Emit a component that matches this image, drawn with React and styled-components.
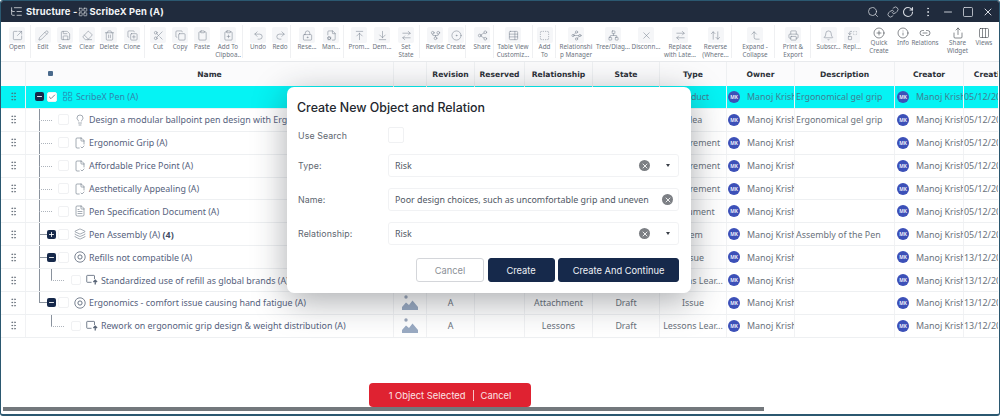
import React from 'react';
import styled, { createGlobalStyle } from 'styled-components';
import {
  SquareArrowOutUpRight, Pencil, Save, Eraser, Trash2, CopyPlus, Scissors, Copy, Clipboard, ClipboardPlus,
  Undo2, Redo2, LockKeyhole, FileCog, ArrowUpToLine, ArrowDownToLine, ArrowRightLeft, GitFork, CircleDot,
  Share2, TableProperties, SquareDashed, Waypoints, Network, X, ArrowUpDown, CornerLeftUp, Printer, Bell, Replace,
  CirclePlus, Info, Link2, Share, Columns3, Search, Link, RotateCw, EllipsisVertical, Minus, Square,
  ListTree, LayoutGrid, GripVertical, Check, Lightbulb, FileCheck2, FileText, Layers, Plus
} from 'lucide-react';

const GlobalStyle = createGlobalStyle`
  html, body { margin: 0; padding: 0; background: #fff; }
  body { font-family: "Noto Sans", sans-serif; }
`;

const Page = styled.div`
  position: relative;
  width: 1000px;
  height: 416px;
  box-sizing: border-box;
  border: 1px solid #2b5870;
  border-bottom-width: 2px;
  border-radius: 3px;
  display: flex;
  flex-direction: column;
  overflow: hidden;
  background: #fff;
`;

const TitleBar = styled.div`
  height: 21px;
  background: #202b3d;
  color: #f2f4f7;
  display: flex;
  align-items: center;
  padding: 0 5px 0 9px;
  font-family: Inter, sans-serif;
  font-weight: 700;
  font-size: 9.4px;
  flex: none;
`;

const TitleText = styled.span`
  margin-left: 3px;
  display: flex;
  align-items: center;
  gap: 1px;
  letter-spacing: 0.15px;
`;

const TitleActions = styled.div`
  margin-left: auto;
  display: flex;
  align-items: center;
  gap: 8px;
  color: #d7dbe2;
`;

const TitleLink = styled.span`
  display: flex;
  margin-right: -5px;
`;

const Toolbar = styled.div`
  height: 39px;
  flex: none;
  display: flex;
  padding-left: 3px;
  border-bottom: 1px solid #e8eaed;
  overflow: hidden;
`;

const ToolGroup = styled.div`
  display: flex;
  flex: none;
  margin-right: ${p => p.$gap ?? 1}px;
  padding-right: 1px;
  position: relative;
  &::after {
    content: '';
    position: absolute;
    right: 0;
    top: 3px;
    bottom: 3px;
    border-right: 1px solid ${p => (p.$plain || p.$bare ? 'transparent' : '#eff0f2')};
  }
`;

const Tool = styled.div`
  width: ${p => p.$w}px;
  flex: none;
  display: flex;
  flex-direction: column;
  align-items: center;
  padding-top: 5px;
  font-size: 6.3px;
  line-height: 7.6px;
  color: #6c7480;
  text-align: center;
`;

const Tile = styled.div`
  width: ${p => (p.$plain ? 12 : 16)}px;
  height: ${p => (p.$plain ? 12 : 16)}px;
  background: ${p => (p.$plain ? 'transparent' : '#f5f6f8')};
  color: ${p => (p.$plain ? '#3a3f47' : '#76808e')};
  border-radius: 2px;
  display: flex;
  align-items: center;
  justify-content: center;
`;

const ToolLabel = styled.span`
  white-space: pre;
`;

const Table = styled.div`
  flex: 1;
  overflow: hidden;
  min-height: 0;
  margin-right: 1px;
`;

const cols = '25px 368px 33px 48px 50px 68px 67px 67px 68px 100px 69px 80px';

const HeaderRow = styled.div`
  display: grid;
  grid-template-columns: ${cols};
  height: 24px;
  background: #fbfbfc;
  width: 1053px;
`;

const HeaderCell = styled.div`
  display: flex;
  align-items: center;
  justify-content: center;
  font-family: "DejaVu Sans", sans-serif;
  font-weight: 700;
  font-size: 7.6px;
  color: #2c3138;
  border-right: 1px solid #eef0f2;
  white-space: nowrap;
  overflow: hidden;
`;

const NameHead = styled(HeaderCell)`
  position: relative;
  & > i {
    position: absolute;
    left: 22px;
    top: 9px;
    width: 5px;
    height: 5px;
    border-radius: 1px;
    background: #4a6a8c;
  }
`;

const Row = styled.div`
  display: grid;
  grid-template-columns: ${cols};
  height: 22.9px;
  box-sizing: border-box;
  width: 1053px;
  border-bottom: 1px solid #eef0f2;
  background: ${p => (p.$selected ? '#05f3f4' : '#fff')};
`;

const Cell = styled.div`
  display: flex;
  align-items: center;
  justify-content: ${p => (p.$left ? 'flex-start' : 'center')};
  padding-left: ${p => p.$pad || 0}px;
  gap: 7px;
  font-size: 8.9px;
  color: ${p => (p.$selected ? '#3f7f93' : '#6a727c')};
  border-right: 1px solid #f1f2f4;
  white-space: nowrap;
  overflow: hidden;
  min-width: 0;
`;

const DragCell = styled(Cell)`
  color: #59636e;
`;

const TreeCell = styled.div`
  display: flex;
  align-items: stretch;
  padding-left: ${p => (p.$root ? 9 : 13)}px;
  border-right: 1px solid #f1f2f4;
  white-space: nowrap;
  overflow: hidden;
`;

const Guide = styled.div`
  width: ${p => p.$w}px;
  flex: none;
  position: relative;
  &::before {
    content: '';
    position: absolute;
    left: 0;
    top: -1px;
    height: ${p => (p.$vert === 'half' ? '12px' : p.$vert === 'full' ? '25px' : '0')};
    border-left: 1px solid #8a929d;
  }
  &::after {
    content: '';
    position: absolute;
    left: 0;
    right: ${p => p.$end || 0}px;
    top: 11px;
    border-top: 1px ${p => (p.$dash ? 'dotted #aeb4bc' : 'none')};
  }
`;

const Expander = styled.div`
  width: 9px;
  height: 9px;
  flex: none;
  align-self: center;
  border-radius: 2px;
  background: #16294b;
  color: #fff;
  display: flex;
  align-items: center;
  justify-content: center;
`;

const Stub = styled.div`
  width: ${p => p.$w}px;
  flex: none;
  align-self: center;
  border-top: 1px solid #8a929d;
`;

const CheckBox = styled.div`
  width: ${p => p.$size || 10}px;
  height: ${p => p.$size || 10}px;
  flex: none;
  align-self: center;
  margin-left: ${p => p.$ml || 0}px;
  border: 1px solid #f0f1f3;
  border-radius: 2px;
  box-sizing: border-box;
  background: #fff;
  color: #3a4657;
  display: flex;
  align-items: center;
  justify-content: center;
`;

const RowIcon = styled.span`
  width: 12px;
  flex: none;
  margin-left: ${p => p.$ml || 5}px;
  display: flex;
  align-items: center;
  justify-content: center;
  color: ${p => (p.$selected ? '#2f78a8' : '#5a6678')};
`;

const NameText = styled.span`
  margin-left: 3px;
  align-self: center;
  font-size: 8.9px;
  color: ${p => (p.$selected ? '#2f86ad' : '#56627d')};
  & b {
    font-weight: 700;
    color: #3f4a63;
  }
`;

const Avatar = styled.span`
  width: 12px;
  height: 12px;
  flex: none;
  border-radius: 50%;
  background: #3c50b8;
  color: #fff;
  font-size: 4.8px;
  font-weight: 600;
  display: flex;
  align-items: center;
  justify-content: center;
`;

const ScrollTrack = styled.div`
  height: 4px;
  flex: none;
  margin: 0 0 3px 2px;
`;

const ScrollThumb = styled.div`
  height: 100%;
  width: 761px;
  background: #73787c;
`;

const SelectionBar = styled.div`
  position: absolute;
  left: 368px;
  top: 382px;
  width: 162px;
  height: 24px;
  border-radius: 4px;
  background: #df2231;
  color: #fbe4e6;
  font-family: Inter, sans-serif;
  font-size: 9.4px;
  display: flex;
  align-items: center;
  justify-content: center;
  gap: 7px;
  & > i {
    width: 1px;
    height: 11px;
    background: #f6c4c8;
  }
`;

const Modal = styled.div`
  position: absolute;
  left: 286px;
  top: 86px;
  width: 404px;
  height: 206px;
  box-sizing: border-box;
  padding: 12px 12px 0 10px;
  border-radius: 7px;
  background: #fff;
  box-shadow: 0 8px 34px rgba(30, 34, 42, 0.38);
  font-family: Inter, sans-serif;
`;

const ModalTitle = styled.div`
  font-size: 12.4px;
  font-weight: 500;
  color: #23272e;
  line-height: 18px;
  margin-bottom: 10px;
`;

const Form = styled.div`
  display: grid;
  grid-template-columns: 91px 1fr;
  align-items: center;
  row-gap: 11px;
`;

const FieldLabel = styled.div`
  font-size: 8.8px;
  color: #5e6670;
  padding-left: 1px;
  letter-spacing: 0.1px;
`;

const Field = styled.div`
  height: 23px;
  box-sizing: border-box;
  border: 1px solid #f1f2f4;
  border-radius: 3px;
  display: flex;
  align-items: center;
  padding: 0 5px 0 6px;
  font-family: "Noto Sans", sans-serif;
  font-size: 8.9px;
  color: #4f5864;
`;

const FieldValue = styled.span`
  flex: 1;
  white-space: nowrap;
  overflow: hidden;
`;

const FieldIcons = styled.span`
  display: flex;
  align-items: center;
  gap: 13px;
`;

const Clear = styled.span`
  width: 11px;
  height: 11px;
  border-radius: 50%;
  background: #7c7f84;
  color: #fff;
  display: flex;
  align-items: center;
  justify-content: center;
`;

const Caret = styled.span`
  width: 0;
  height: 0;
  margin: 0 3px;
  border-left: 2.5px solid transparent;
  border-right: 2.5px solid transparent;
  border-top: 3px solid #3a3f47;
`;

const Buttons = styled.div`
  display: flex;
  justify-content: flex-end;
  gap: 3.5px;
  margin-top: 13px;
`;

const Button = styled.button`
  width: ${p => p.$w}px;
  height: 24px;
  border-radius: 3px;
  font-family: Inter, sans-serif;
  font-size: 9.3px;
  padding: 0;
  border: 1px solid ${p => (p.$ghost ? '#d4d6da' : '#16294b')};
  background: ${p => (p.$ghost ? '#fff' : '#16294b')};
  color: ${p => (p.$ghost ? '#8b9097' : '#eef1f6')};
`;

const ImageThumb = () => (
  <svg width="16" height="17" viewBox="0 0 16 17">
    <circle cx="4" cy="3" r="1.7" fill="#9aa7bb" />
    <path d="M0 16 L0 13 L4 8.5 L7 11 L10.5 6.5 L16 13 L16 16 Z" fill="#9aabc3" />
  </svg>
);

const TargetIcon = () => (
  <svg width="12" height="12" viewBox="0 0 12 12" fill="none" stroke="currentColor">
    <circle cx="6" cy="6" r="5.2" strokeWidth="0.8" />
    <circle cx="6" cy="6" r="2.1" strokeWidth="0.9" />
  </svg>
);

const LessonIcon = () => (
  <svg width="13" height="12" viewBox="0 0 13 12" fill="none" stroke="currentColor">
    <path d="M6 8.5H1.5a.7.7 0 0 1-.7-.7V1.7A.7.7 0 0 1 1.5 1h7a.7.7 0 0 1 .7.7V5" strokeWidth="0.9" />
    <path d="M10 11V6.5M8 8.2 10 6.2l2 2" strokeWidth="1.4" />
  </svg>
);

const toolGroups = [
  { gap: 1, tools: [['Open', SquareArrowOutUpRight, 26]] },
  { gap: 1, tools: [['Edit', Pencil, 22], ['Save', Save, 22], ['Clear', Eraser, 22], ['Delete', Trash2, 22], ['Clone', CopyPlus, 24]] },
  { gap: 3, tools: [['Cut', Scissors, 24], ['Copy', Copy, 20], ['Paste', Clipboard, 24], ['Add To\nClipboa..', ClipboardPlus, 28]] },
  { gap: 4, tools: [['Undo', Undo2, 24], ['Redo', Redo2, 20]] },
  { gap: 3, tools: [['Rese...', LockKeyhole, 24], ['Man...', FileCog, 24]] },
  { gap: 3, tools: [['Prom...', ArrowUpToLine, 24], ['Dem...', ArrowDownToLine, 22], ['Set\nState', ArrowRightLeft, 26]] },
  { gap: 5, tools: [['Revise', GitFork, 24], ['Create', CircleDot, 18]] },
  { gap: 0, tools: [['Share', Share2, 22]] },
  { gap: 1, tools: [['Table View\nCustomiz...', TableProperties, 38]] },
  { gap: 2, tools: [['Add\nTo', SquareDashed, 21]] },
  { gap: 4, tools: [['Relationshi\np Manager', Waypoints, 36], ['Tree/Diag...', Network, 38], ['Disconn...', X, 28], ['Replace\nwith Late...', ArrowRightLeft, 40], ['Reverse\n(Where...', ArrowUpDown, 31]] },
  { gap: 1, tools: [['Expand -\nCollapse', CornerLeftUp, 38]] },
  { gap: 2, tools: [['Print &\nExport', Printer, 34]] },
  { gap: -1, bare: true, tools: [['Subscr...', Bell, 31], ['Repl...', Replace, 16]] }
];

const plainTools = [
  ['Quick\nCreate', CirclePlus, 38],
  ['Info', Info, 10],
  ['Relations', Link2, 34],
  ['Share\nWidget', Share, 31],
  ['Views', Columns3, 22]
];

const rows = [
  { level: 0, open: true, selected: true, icon: <LayoutGrid size={11} strokeWidth={1.3} />, name: 'ScribeX Pen (A)', rel: '', type: 'Product', desc: 'Ergonomical gel grip', date: '05/12/2024' },
  { level: 1, icon: <Lightbulb size={12} strokeWidth={1.1} />, name: 'Design a modular ballpoint pen design with Ergonomic grip (A)', rel: 'Idea', type: 'Idea', desc: 'Ergonomical gel grip', date: '05/12/2024' },
  { level: 1, icon: <FileCheck2 size={12} strokeWidth={1.1} />, name: 'Ergonomic Grip (A)', rel: 'Requirement', type: 'Requirement', date: '05/12/2024' },
  { level: 1, icon: <FileCheck2 size={12} strokeWidth={1.1} />, name: 'Affordable Price Point (A)', rel: 'Requirement', type: 'Requirement', date: '05/12/2024' },
  { level: 1, icon: <FileCheck2 size={12} strokeWidth={1.1} />, name: 'Aesthetically Appealing (A)', rel: 'Requirement', type: 'Requirement', date: '05/12/2024' },
  { level: 1, icon: <FileText size={12} strokeWidth={1.1} />, name: 'Pen Specification Document (A)', rel: 'Document', type: 'Document', date: '05/12/2024' },
  { level: 1, open: false, icon: <Layers size={12} strokeWidth={1.1} />, name: 'Pen Assembly (A)', count: '(4)', rel: 'Item', type: 'Item', desc: 'Assembly of the Pen', date: '05/12/2024' },
  { level: 1, open: true, icon: <TargetIcon />, name: 'Refills not compatible (A)', rel: 'Attachment', type: 'Issue', date: '13/12/2024' },
  { level: 2, icon: <LessonIcon />, name: 'Standardized use of refill as global brands (A)', rel: 'Lessons', type: 'Lessons Lear...', date: '13/12/2024' },
  { level: 1, open: true, last: true, icon: <TargetIcon />, name: 'Ergonomics - comfort issue causing hand fatigue (A)', rel: 'Attachment', type: 'Issue', date: '13/12/2024' },
  { level: 2, last: true, icon: <LessonIcon />, name: 'Rework on ergonomic grip design & weight distribution (A)', rel: 'Lessons', type: 'Lessons Lear...', date: '13/12/2024' }
];

const TreeLead = ({ row }) => {
  const hasToggle = row.open !== undefined;
  const toggle = (
    <Expander>{row.open ? <Minus size={7} strokeWidth={3} /> : <Plus size={7} strokeWidth={3} />}</Expander>
  );
  if (row.level === 0) return toggle;
  if (row.level === 1) {
    const vert = row.last ? 'half' : 'full';
    if (hasToggle) {
      return (
        <>
          <Guide $w={0} $vert={vert} />
          <Stub $w={8} />
          {toggle}
        </>
      );
    }
    return <Guide $w={17} $vert={vert} $dash $end={4} />;
  }
  return (
    <>
      <Guide $w={12} $vert={row.last ? 'none' : 'full'} />
      <Guide $w={20} $vert="half" $dash $end={7} />
    </>
  );
};

const tableRow = row => (
  <Row key={row.name} $selected={row.selected}>
    <DragCell $selected={row.selected}>
      <GripVertical size={11} strokeWidth={1.4} />
    </DragCell>
    <TreeCell $root={row.level === 0}>
      <TreeLead row={row} />
      <CheckBox
        $size={row.level === 1 ? 11 : 10}
        $ml={row.level === 2 ? 0 : row.level === 0 ? 3 : 2}
      >
        {row.selected && <Check size={8} strokeWidth={2} />}
      </CheckBox>
      <RowIcon $selected={row.selected} $ml={row.level === 0 ? 4 : 5}>{row.icon}</RowIcon>
      <NameText $selected={row.selected}>
        {row.name} {row.count && <b>{row.count}</b>}
      </NameText>
    </TreeCell>
    <Cell $selected={row.selected}><ImageThumb /></Cell>
    <Cell $selected={row.selected}>A</Cell>
    <Cell $selected={row.selected} />
    <Cell $selected={row.selected}>{row.rel}</Cell>
    <Cell $selected={row.selected}>Draft</Cell>
    <Cell $selected={row.selected}>{row.type}</Cell>
    <Cell $selected={row.selected} $left $pad={1}><Avatar>MK</Avatar>Manoj Krish</Cell>
    <Cell $selected={row.selected} $left $pad={1}>{row.desc}</Cell>
    <Cell $selected={row.selected} $left $pad={2}><Avatar>MK</Avatar>Manoj Krish</Cell>
    <Cell $selected={row.selected} $left>{row.date}</Cell>
  </Row>
);

const headers = ['Revision', 'Reserved', 'Relationship', 'State', 'Type', 'Owner', 'Description', 'Creator', 'Creation Date'];

const ClearButton = () => (
  <Clear><X size={8} strokeWidth={2.6} /></Clear>
);

export default function App() {
  return (
    <Page>
      <GlobalStyle />
      <TitleBar>
        <ListTree size={13} strokeWidth={1.3} />
        <TitleText>
          Structure - <LayoutGrid size={10} strokeWidth={1.4} /> ScribeX Pen (A)
        </TitleText>
        <TitleActions>
          <Search size={12} strokeWidth={1.5} />
          <TitleLink><Link size={12} strokeWidth={1.5} /></TitleLink>
          <RotateCw size={12} strokeWidth={2.2} />
          <EllipsisVertical size={12} strokeWidth={1.8} />
          <Minus size={12} strokeWidth={1.8} />
          <Square size={12} strokeWidth={1.6} />
          <X size={12} strokeWidth={2} />
        </TitleActions>
      </TitleBar>

      <Toolbar>
        {toolGroups.map((g, i) => (
          <ToolGroup key={i} $gap={g.gap} $bare={g.bare}>
            {g.tools.map(([label, C, w]) => (
              <Tool key={label} $w={w}>
                <Tile><C size={11} strokeWidth={1.15} /></Tile>
                <ToolLabel>{label}</ToolLabel>
              </Tool>
            ))}
          </ToolGroup>
        ))}
        <ToolGroup $plain>
          {plainTools.map(([label, C, w]) => (
            <Tool key={label} $w={w}>
              <Tile $plain><C size={12} strokeWidth={1.2} /></Tile>
              <ToolLabel>{label}</ToolLabel>
            </Tool>
          ))}
        </ToolGroup>
      </Toolbar>

      <Table>
        <HeaderRow>
          <HeaderCell />
          <NameHead><i />Name</NameHead>
          <HeaderCell />
          {headers.map(h => <HeaderCell key={h}>{h}</HeaderCell>)}
        </HeaderRow>
        {rows.map(tableRow)}
      </Table>

      <ScrollTrack><ScrollThumb /></ScrollTrack>

      <SelectionBar>
        1 Object Selected <i /> Cancel
      </SelectionBar>

      <Modal>
        <ModalTitle>Create New Object and Relation</ModalTitle>
        <Form>
          <FieldLabel>Use Search</FieldLabel>
          <CheckBox $size={16} />
          <FieldLabel>Type:</FieldLabel>
          <Field>
            <FieldValue>Risk</FieldValue>
            <FieldIcons><ClearButton /><Caret /></FieldIcons>
          </Field>
          <FieldLabel>Name:</FieldLabel>
          <Field>
            <FieldValue>Poor design choices, such as uncomfortable grip and uneven</FieldValue>
            <FieldIcons><ClearButton /></FieldIcons>
          </Field>
          <FieldLabel>Relationship:</FieldLabel>
          <Field>
            <FieldValue>Risk</FieldValue>
            <FieldIcons><ClearButton /><Caret /></FieldIcons>
          </Field>
        </Form>
        <Buttons>
          <Button $w={68} $ghost>Cancel</Button>
          <Button $w={67}>Create</Button>
          <Button $w={121}>Create And Continue</Button>
        </Buttons>
      </Modal>
    </Page>
  );
}
